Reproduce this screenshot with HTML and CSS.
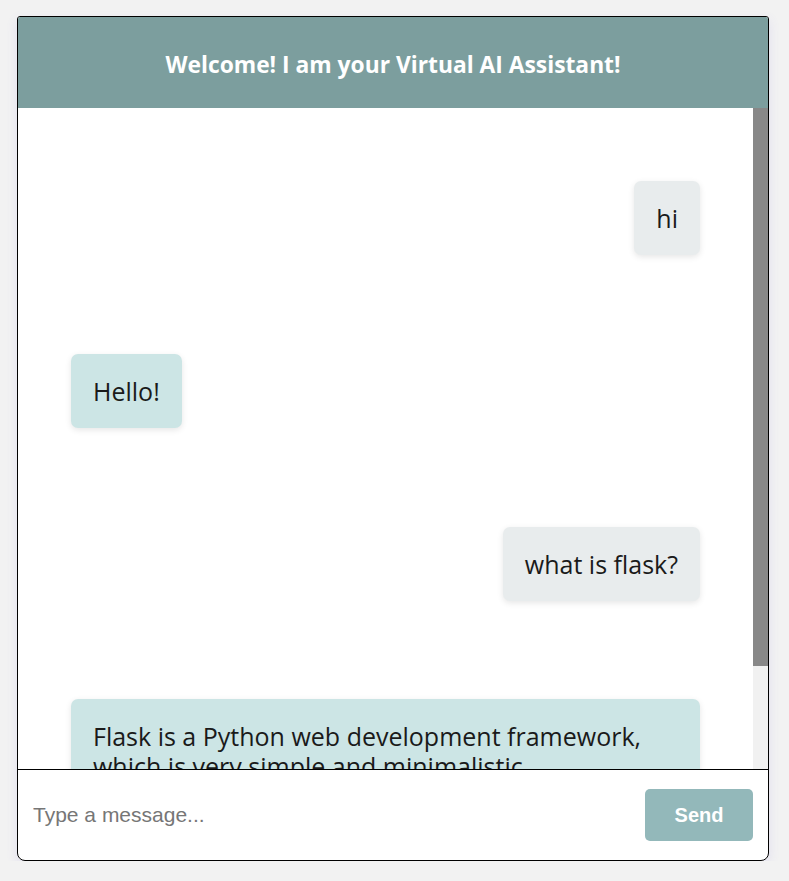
FILE: index.html
```html
<!DOCTYPE html>
<html lang="en">
<head>
<meta charset="utf-8">
<title>Virtual AI Assistant</title>
<link rel="stylesheet" href="styles.css">
</head>
<body>
<div class="chat">
  <header class="chat-header">Welcome! I am your Virtual AI Assistant!</header>
  <div class="body">
    <div class="messages">
      <div class="row user"><div class="bubble">hi</div></div>
      <div class="row bot"><div class="bubble">Hello!</div></div>
      <div class="row user"><div class="bubble">what is flask?</div></div>
      <div class="row bot"><div class="bubble">Flask is a Python web development framework, which is very simple and minimalistic.</div></div>
    </div>
    <div class="scrollbar"><div class="scrollbar-thumb"></div></div>
  </div>
  <form class="composer">
    <input class="composer-input" type="text" placeholder="Type a message...">
    <button class="composer-send" type="button">Send</button>
  </form>
</div>
</body>
</html>
```

FILE: styles.css
```css
html, body {
  margin: 0;
  padding: 0;
  background: #f2f2f2;
}
body {
  padding: 16px 20px 0 17px;
}
.chat {
  width: 750px;
  height: 843px;
  border: 1px solid #000;
  border-radius: 3px 3px 8px 8px;
  background: #fff;
  display: flex;
  flex-direction: column;
  overflow: hidden;
  box-shadow: 0 4px 12px rgba(110, 90, 220, 0.12);
}
.chat-header {
  flex: 0 0 91px;
  background: #7c9e9e;
  color: #fff;
  font-family: "Open Sans", "Noto Sans", sans-serif;
  font-weight: 700;
  font-size: 22.8px;
  display: flex;
  align-items: center;
  justify-content: center;
  padding-top: 4px;
  box-sizing: border-box;
}
.body {
  flex: 1 1 auto;
  min-height: 0;
  display: flex;
}
.messages {
  flex: 1 1 auto;
  min-width: 0;
  overflow: hidden;
  display: flex;
  flex-direction: column;
  gap: 98.8px;
  padding: 73px 53px 88px 53px;
  font-family: "Open Sans", "Noto Sans", sans-serif;
  font-size: 25px;
  color: #1a1a1a;
}
.scrollbar {
  flex: 0 0 15px;
  background: #f1f1f1;
}
.scrollbar-thumb {
  height: 558px;
  background: #888;
}
.row {
  display: flex;
}
.row.user {
  justify-content: flex-end;
}
.row.bot {
  justify-content: flex-start;
}
.bubble {
  padding: 22px 22px;
  line-height: 30px;
  border-radius: 7px;
  box-shadow: 0 2px 6px rgba(0, 0, 0, 0.1);
}
.user .bubble {
  background: #e8eced;
}
.bot .bubble {
  background: #cce5e5;
}
.composer {
  flex: 0 0 90px;
  margin: 0;
  border-top: 1px solid #000;
  display: flex;
  align-items: center;
  padding: 0 15px 0 15px;
  gap: 12px;
}
.composer-input {
  flex: 1 1 auto;
  border: none;
  outline: none;
  font-family: "Liberation Sans", Arial, sans-serif;
  font-size: 21px;
  color: #222;
  padding: 0;
  background: transparent;
}
.composer-input::placeholder {
  color: #767676;
}
.composer-send {
  width: 108px;
  height: 52px;
  border: none;
  border-radius: 5px;
  background: #93b8ba;
  color: #fff;
  font-family: "Liberation Sans", Arial, sans-serif;
  font-weight: 700;
  font-size: 20px;
}
```
